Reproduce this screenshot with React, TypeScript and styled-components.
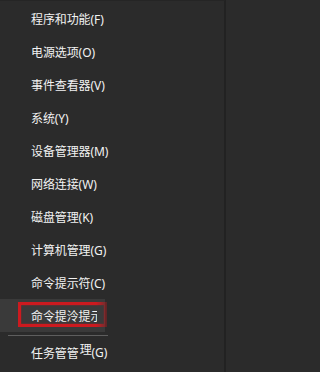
import React from 'react';
import styled, { createGlobalStyle } from 'styled-components';

const GlobalStyle = createGlobalStyle`
  html, body {
    margin: 0;
    padding: 0;
    background: #2b2b2b;
  }
`;

const items = [
  { label: '程序和功能', key: 'F' },
  { label: '电源选项', key: 'O' },
  { label: '事件查看器', key: 'V' },
  { label: '系统', key: 'Y' },
  { label: '设备管理器', key: 'M' },
  { label: '网络连接', key: 'W' },
  { label: '磁盘管理', key: 'K' },
  { label: '计算机管理', key: 'G' },
  { label: '命令提示符', key: 'C' },
];

const App = () => {
  return (
    <>
      <GlobalStyle />
      <Menu>
        {items.map((item) => (
          <Item key={item.label}>
            {item.label}({item.key})
          </Item>
        ))}
        <ActiveItem>
          <Clip>命令提泠提示</Clip>
          <Marker />
        </ActiveItem>
        <Divider />
        <Item>
          任务管<Cut>管</Cut>
          <Raised>理</Raised>(G)
        </Item>
      </Menu>
    </>
  );
};

const Menu = styled.div`
  box-sizing: border-box;
  width: 226px;
  height: 372px;
  padding-top: 1px;
  background: #2b2b2b;
  border-top: 1px solid #252525;
  border-right: 2px solid #222222;
  font-family: 'Noto Sans', 'Noto Sans CJK SC', sans-serif;
  font-size: 12px;
  color: #f2f2f2;
  display: flex;
  flex-direction: column;
`;

const Item = styled.div`
  height: 33px;
  padding-left: 31px;
  display: flex;
  align-items: center;
  white-space: nowrap;
  letter-spacing: -0.1px;
`;

const ActiveItem = styled(Item)`
  position: relative;
  width: 105px;
  box-sizing: border-box;
  background: #3a3a3a;
`;

const Clip = styled.span`
  display: block;
  flex: none;
  width: 66px;
  overflow: hidden;
`;

const Marker = styled.div`
  position: absolute;
  left: 18px;
  top: 3px;
  width: 89px;
  height: 25px;
  box-sizing: border-box;
  border: 3px solid #cc1a1f;
  box-shadow: 0 0 3px rgba(210, 24, 28, 0.8), inset 0 0 2px rgba(210, 24, 28, 0.7);
  filter: blur(0.4px);
  -webkit-mask-image: linear-gradient(to right, #000 88%, rgba(0, 0, 0, 0.3) 100%);
  mask-image: linear-gradient(to right, #000 88%, rgba(0, 0, 0, 0.3) 100%);
`;

const Divider = styled.div`
  margin: 3px 0 0 8px;
  width: 100px;
  height: 1px;
  background: #5e5e5e;
`;

const Cut = styled.span`
  display: inline-block;
  width: 13px;
  overflow: hidden;
`;

const Raised = styled.span`
  position: relative;
  top: -4px;
`;

export default App;
